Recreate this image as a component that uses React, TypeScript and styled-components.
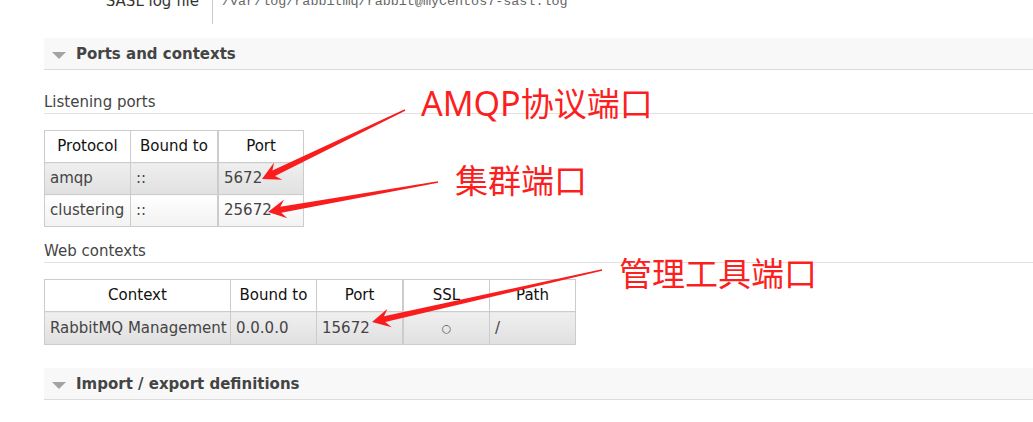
import styled, { createGlobalStyle } from "styled-components";

const GlobalStyle = createGlobalStyle`
  html, body {
    margin: 0;
    padding: 0;
    background: #fff;
    overflow: hidden;
  }
  body {
    font-family: "DejaVu Sans", Verdana, sans-serif;
    font-size: 15px;
    color: #444;
  }
`;

const Page = styled.div`
  position: relative;
  width: 1033px;
  height: 422px;
  box-sizing: border-box;
  padding-left: 44px;
  display: flex;
  flex-direction: column;
`;

const FactRow = styled.div`
  display: flex;
  margin-top: -9px;
  line-height: 21px;
`;

const FactLabel = styled.div`
  width: 169px;
  box-sizing: border-box;
  padding: 0 13px 12px 0;
  text-align: right;
  color: #333;
  border-right: 1px solid #ccc;
`;

const FactValue = styled.div`
  padding-left: 9px;
  font-family: "Liberation Mono", "Courier New", monospace;
  font-size: 13.4px;
  color: #666;
`;

const SectionHeader = styled.h2<{ $top: number }>`
  display: flex;
  align-items: center;
  gap: 10px;
  margin: ${(p) => p.$top}px 0 0 0;
  padding-left: 8px;
  height: 31px;
  background: #f8f8f8;
  border-bottom: 1px solid #dcdcdc;
  font-size: 15px;
  font-weight: bold;
  color: #444;
`;

const Caret = styled.span`
  width: 0;
  height: 0;
  margin-top: 3px;
  border-left: 7px solid transparent;
  border-right: 7px solid transparent;
  border-top: 7px solid #a3a3a3;
`;

const SubHeading = styled.h3<{ $top: number }>`
  margin: ${(p) => p.$top}px 0 0 0;
  font-size: 15px;
  font-weight: normal;
  line-height: 21px;
  color: #444;
  border-bottom: 1px solid #e2e2e2;
`;

const List = styled.table<{ $width: number }>`
  margin-top: 16px;
  width: ${(p) => p.$width}px;
  border-collapse: collapse;
  table-layout: fixed;
  line-height: 21px;
`;

const Th = styled.th<{ $w: number; $thick?: boolean }>`
  width: ${(p) => p.$w - 11}px;
  padding: 5px 5px;
  border: 1px solid #ccc;
  ${(p) => (p.$thick ? "border-left: 2px solid #ccc;" : "")}
  background: #fff;
  font-weight: normal;
  text-align: center;
  color: #111;
  white-space: nowrap;
`;

const Td = styled.td<{ $alt: boolean; $center?: boolean; $thick?: boolean }>`
  padding: 5px 5px;
  border: 1px solid #ccc;
  ${(p) => (p.$thick ? "border-left: 2px solid #ccc;" : "")}
  background: ${(p) =>
    p.$alt
      ? "linear-gradient(#efefef, #e0e0e0)"
      : "linear-gradient(#ffffff, #f2f2f2)"};
  text-align: ${(p) => (p.$center ? "center" : "left")};
  color: #444;
  white-space: nowrap;
`;

const Dot = styled.span`
  font-size: 11px;
  color: #555;
`;

const Overlay = styled.svg`
  position: absolute;
  left: 0;
  top: 0;
  pointer-events: none;
`;

const Note = styled.span<{ $x: number; $y: number }>`
  position: absolute;
  left: ${(p) => p.$x}px;
  top: ${(p) => p.$y}px;
  font-family: "Noto Sans", "Noto Sans CJK SC", sans-serif;
  font-size: 33px;
  line-height: 32px;
  color: #fb1f1f;
  white-space: nowrap;
`;

const Latin = styled.span`
  font-size: 34px;
`;

type Pt = [number, number];

// tapered arrow polygon, thin at the tail, swept-back head at the tip
function arrowPoints(tail: Pt, tip: Pt): string {
  const dx = tail[0] - tip[0];
  const dy = tail[1] - tip[1];
  const len = Math.hypot(dx, dy);
  const ux = dx / len;
  const uy = dy / len;
  const nx = -uy;
  const ny = ux;
  const at = (d: number, s: number) =>
    `${(tip[0] + ux * d + nx * s).toFixed(1)},${(tip[1] + uy * d + ny * s).toFixed(1)}`;
  return [
    at(0, 0),
    at(18, 9.5),
    at(13, 3),
    at(len, 0.8),
    at(len, -0.8),
    at(13, -3),
    at(18, -9.5),
  ].join(" ");
}

const arrows: { tail: Pt; tip: Pt }[] = [
  { tail: [405, 110], tip: [262, 179] },
  { tail: [438, 182], tip: [268, 212] },
  { tail: [602, 270], tip: [372, 322] },
];

const listening = [
  { protocol: "amqp", bound: "::", port: "5672" },
  { protocol: "clustering", bound: "::", port: "25672" },
];

export default function App() {
  return (
    <>
      <GlobalStyle />
      <Page>
        <FactRow>
          <FactLabel>SASL log file</FactLabel>
          <FactValue>/var/log/rabbitmq/rabbit@myCentos7-sasl.log</FactValue>
        </FactRow>

        <SectionHeader $top={14}>
          <Caret />
          Ports and contexts
        </SectionHeader>

        <SubHeading $top={22}>Listening ports</SubHeading>
        <List $width={258}>
          <thead>
            <tr>
              <Th $w={86}>Protocol</Th>
              <Th $w={87}>Bound to</Th>
              <Th $w={85} $thick>
                Port
              </Th>
            </tr>
          </thead>
          <tbody>
            {listening.map((row, i) => (
              <tr key={row.protocol}>
                <Td $alt={i % 2 === 0}>{row.protocol}</Td>
                <Td $alt={i % 2 === 0}>{row.bound}</Td>
                <Td $alt={i % 2 === 0} $thick>
                  {row.port}
                </Td>
              </tr>
            ))}
          </tbody>
        </List>

        <SubHeading $top={14}>Web contexts</SubHeading>
        <List $width={530}>
          <thead>
            <tr>
              <Th $w={186}>Context</Th>
              <Th $w={86}>Bound to</Th>
              <Th $w={86}>Port</Th>
              <Th $w={86} $thick>
                SSL
              </Th>
              <Th $w={86}>Path</Th>
            </tr>
          </thead>
          <tbody>
            <tr>
              <Td $alt>RabbitMQ Management</Td>
              <Td $alt>0.0.0.0</Td>
              <Td $alt>15672</Td>
              <Td $alt $center $thick>
                <Dot>○</Dot>
              </Td>
              <Td $alt>/</Td>
            </tr>
          </tbody>
        </List>

        <SectionHeader $top={23}>
          <Caret />
          Import / export definitions
        </SectionHeader>

        <Overlay width={1033} height={422} viewBox="0 0 1033 422">
          {arrows.map((a, i) => (
            <polygon key={i} points={arrowPoints(a.tail, a.tip)} fill="#f91d1d" />
          ))}
        </Overlay>
        <Note $x={421} $y={87}>
          <Latin>AMQP</Latin>协议端口
        </Note>
        <Note $x={455} $y={165}>
          集群端口
        </Note>
        <Note $x={619} $y={258}>
          管理工具端口
        </Note>
      </Page>
    </>
  );
}
